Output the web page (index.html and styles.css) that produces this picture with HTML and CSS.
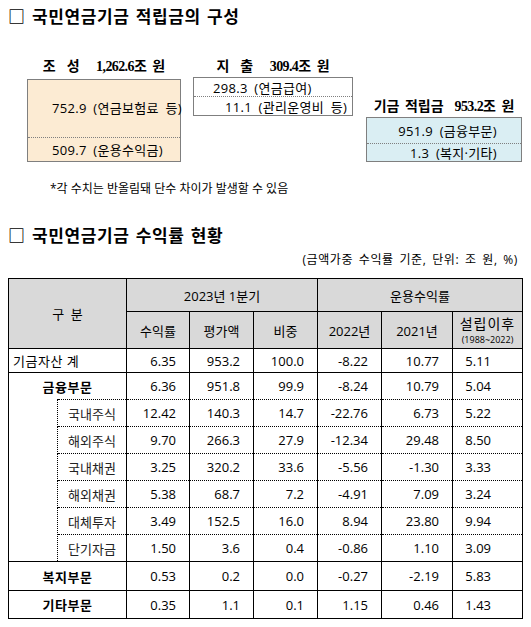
FILE: index.html
```html
<!DOCTYPE html>
<html lang="ko">
<head>
    <meta charset="UTF-8">
    <meta name="viewport" content="width=device-width, initial-scale=1.0">
    <title>국민연금기금 적립금 및 수익률</title>
    <link rel="stylesheet" href="styles.css">
</head>
<body>
<h2 class="section-title">□ 국민연금기금 적립금의 구성</h2>

<div class="composition">
    <div class="group group-income">
        <div class="group-label">조&nbsp;&nbsp;성&nbsp;&nbsp; <span class="label-num">1,262.6</span>조 원</div>
        <div class="box box-income">
            <div class="box-row row-main">752.9 (연금보험료 등)</div>
            <div class="box-row row-rest">509.7 (운용수익금)</div>
        </div>
    </div>

    <div class="group group-expense">
        <div class="group-label">지&nbsp;&nbsp;출&nbsp;&nbsp; <span class="label-num">309.4</span>조 원</div>
        <div class="box box-expense">
            <div class="box-row row-pension">298.3 (연금급여)</div>
            <div class="box-row row-admin">11.1 (관리운영비 등)</div>
        </div>
    </div>

    <div class="group group-reserve">
        <div class="group-label">기금 적립금&nbsp; <span class="label-num">953.2</span>조 원</div>
        <div class="box box-reserve">
            <div class="box-row row-finance">951.9 (금융부문)</div>
            <div class="box-row row-welfare">1.3 (복지·기타)</div>
        </div>
    </div>
</div>

<p class="footnote">*각 수치는 반올림돼 단수 차이가 발생할 수 있음</p>

<h2 class="section-title section-returns">□ 국민연금기금 수익률 현황</h2>
<p class="unit-note">(금액가중 수익률 기준, 단위: 조 원, %)</p>

<table class="returns">
    <colgroup>
        <col style="width: 49px">
        <col style="width: 69px">
        <col style="width: 63px">
        <col style="width: 64px">
        <col style="width: 64px">
        <col style="width: 64px">
        <col style="width: 71px">
        <col style="width: 70px">
    </colgroup>
    <thead>
        <tr class="head-top">
            <th colspan="2" rowspan="2">구&nbsp;&nbsp;분</th>
            <th colspan="3">2023년 1분기</th>
            <th colspan="3">운용수익률</th>
        </tr>
        <tr class="head-sub">
            <th>수익률</th>
            <th>평가액</th>
            <th>비중</th>
            <th>2022년</th>
            <th>2021년</th>
            <th><span class="since-title">설립이후</span><span class="since">(1988~2022)</span></th>
        </tr>
    </thead>
    <tbody>
        <tr class="total">
            <td colspan="2" class="name name-left">기금자산 계</td>
            <td>6.35</td><td>953.2</td><td>100.0</td><td>-8.22</td><td>10.77</td><td>5.11</td>
        </tr>
        <tr class="group-row">
            <td colspan="2" class="name name-bold">금융부문</td>
            <td>6.36</td><td>951.8</td><td>99.9</td><td>-8.24</td><td>10.79</td><td>5.04</td>
        </tr>
        <tr class="sub">
            <td rowspan="6" class="indent"></td>
            <td class="name sub-name">국내주식</td>
            <td>12.42</td><td>140.3</td><td>14.7</td><td>-22.76</td><td>6.73</td><td>5.22</td>
        </tr>
        <tr class="sub">
            <td class="name sub-name">해외주식</td>
            <td>9.70</td><td>266.3</td><td>27.9</td><td>-12.34</td><td>29.48</td><td>8.50</td>
        </tr>
        <tr class="sub">
            <td class="name sub-name">국내채권</td>
            <td>3.25</td><td>320.2</td><td>33.6</td><td>-5.56</td><td>-1.30</td><td>3.33</td>
        </tr>
        <tr class="sub">
            <td class="name sub-name">해외채권</td>
            <td>5.38</td><td>68.7</td><td>7.2</td><td>-4.91</td><td>7.09</td><td>3.24</td>
        </tr>
        <tr class="sub">
            <td class="name sub-name">대체투자</td>
            <td>3.49</td><td>152.5</td><td>16.0</td><td>8.94</td><td>23.80</td><td>9.94</td>
        </tr>
        <tr class="sub">
            <td class="name sub-name">단기자금</td>
            <td>1.50</td><td>3.6</td><td>0.4</td><td>-0.86</td><td>1.10</td><td>3.09</td>
        </tr>
        <tr class="welfare">
            <td colspan="2" class="name name-bold">복지부문</td>
            <td>0.53</td><td>0.2</td><td>0.0</td><td>-0.27</td><td>-2.19</td><td>5.83</td>
        </tr>
        <tr class="other">
            <td colspan="2" class="name name-bold">기타부문</td>
            <td>0.35</td><td>1.1</td><td>0.1</td><td>1.15</td><td>0.46</td><td>1.43</td>
        </tr>
    </tbody>
</table>
</body>
</html>
```

FILE: styles.css
```css
body {
    margin: 0;
    padding: 0 8px;
    font-family: "Open Sans", "Noto Sans CJK KR", sans-serif;
    font-size: 13px;
    color: #000;
    background-color: #fff;
}

.section-title {
    margin: 6px 0 0;
    font-family: "Noto Sans CJK KR", sans-serif;
    font-size: 17px;
    line-height: 20px;
    font-weight: bold;
    letter-spacing: 0.6px;
    word-spacing: 1px;
}

.section-returns {
    margin-top: 28px;
}

/* 적립금 구성 */
.composition {
    display: flex;
    align-items: flex-start;
    margin-top: 32px;
}

.group-label {
    height: 18px;
    line-height: 18px;
    text-align: center;
    white-space: nowrap;
    font-family: "Liberation Serif", "Noto Sans CJK KR", serif;
    font-size: 14px;
    font-weight: bold;
    word-spacing: 2px;
}

.label-num {
    letter-spacing: -0.6px;
}

.group-income {
    width: 154px;
    margin-left: 19px;
}

.group-expense {
    width: 160px;
    margin-left: 12px;
}

.group-reserve {
    width: 156px;
    margin-left: 13px;
    margin-top: 40px;
}

.box {
    border: 1px solid #7f7f7f;
}

.box-row {
    display: flex;
    align-items: center;
    white-space: nowrap;
    letter-spacing: 0.3px;
    word-spacing: 3px;
}

.box-row + .box-row {
    border-top: 1px dotted #7f7f7f;
}

.box-income {
    margin-top: 3px;
    background-color: #fcebd3;
}

.box-income .box-row {
    padding-left: 24px;
}

.row-main {
    height: 55px;
    padding-bottom: 2px;
}

.row-rest {
    height: 23px;
}

.box-expense {
    margin-top: 1px;
}

.row-pension {
    height: 18px;
    padding-left: 19px;
}

.row-admin {
    height: 18px;
    padding-left: 31px;
}

.box-reserve {
    margin-top: 1px;
    background-color: #daeef3;
}

.box-reserve .box-row {
    justify-content: flex-end;
    padding-right: 24px;
}

.row-finance {
    height: 25px;
}

.row-welfare {
    height: 17px;
}

.footnote {
    margin: 19px 0 0;
    padding-left: 42px;
    font-size: 12px;
    line-height: 16px;
}

.unit-note {
    margin: 7px 0 0;
    padding-right: 5px;
    text-align: right;
    font-size: 12px;
    line-height: 16px;
    letter-spacing: 0.6px;
    word-spacing: 2px;
}

/* 수익률 표 */
.returns {
    margin-top: 10px;
    width: 514px;
    table-layout: fixed;
    border-collapse: collapse;
    border: 1px solid #000;
}

.returns th,
.returns td {
    border: 1px solid #000;
    padding: 0;
    white-space: nowrap;
}

.returns th {
    background-color: #d9d9d9;
    font-weight: normal;
    text-align: center;
}

.returns td {
    text-align: right;
    padding-right: 13px;
}

.returns td:last-child {
    padding-right: 31px;
}

.since-title {
    display: block;
    font-size: 14px;
    letter-spacing: 1px;
    line-height: 19px;
}

.since {
    display: block;
    font-size: 9px;
    line-height: 14px;
}

.head-top {
    height: 33px;
}

.head-sub {
    height: 37px;
}

.total {
    height: 24px;
}

.group-row,
.sub {
    height: 27px;
}

.welfare {
    height: 29px;
}

.other {
    height: 28px;
}

.returns td.name {
    text-align: center;
    padding: 0;
}

.returns td.name-left {
    text-align: left;
    padding-left: 4px;
    letter-spacing: 0.5px;
}

.name-bold {
    font-weight: bold;
    letter-spacing: 0.5px;
}

.group-row td {
    border-bottom-style: dotted;
}

.group-row td.name {
    border-bottom: none;
}

.sub td {
    border-top: 1px dotted #000;
    border-bottom: 1px dotted #000;
}

.returns td.indent {
    border-top: none;
    border-bottom: 1px solid #000;
    border-right: 1px dotted #000;
    padding: 0;
}

.returns td.sub-name {
    border-left: 1px dotted #000;
    color: #222;
}
```
